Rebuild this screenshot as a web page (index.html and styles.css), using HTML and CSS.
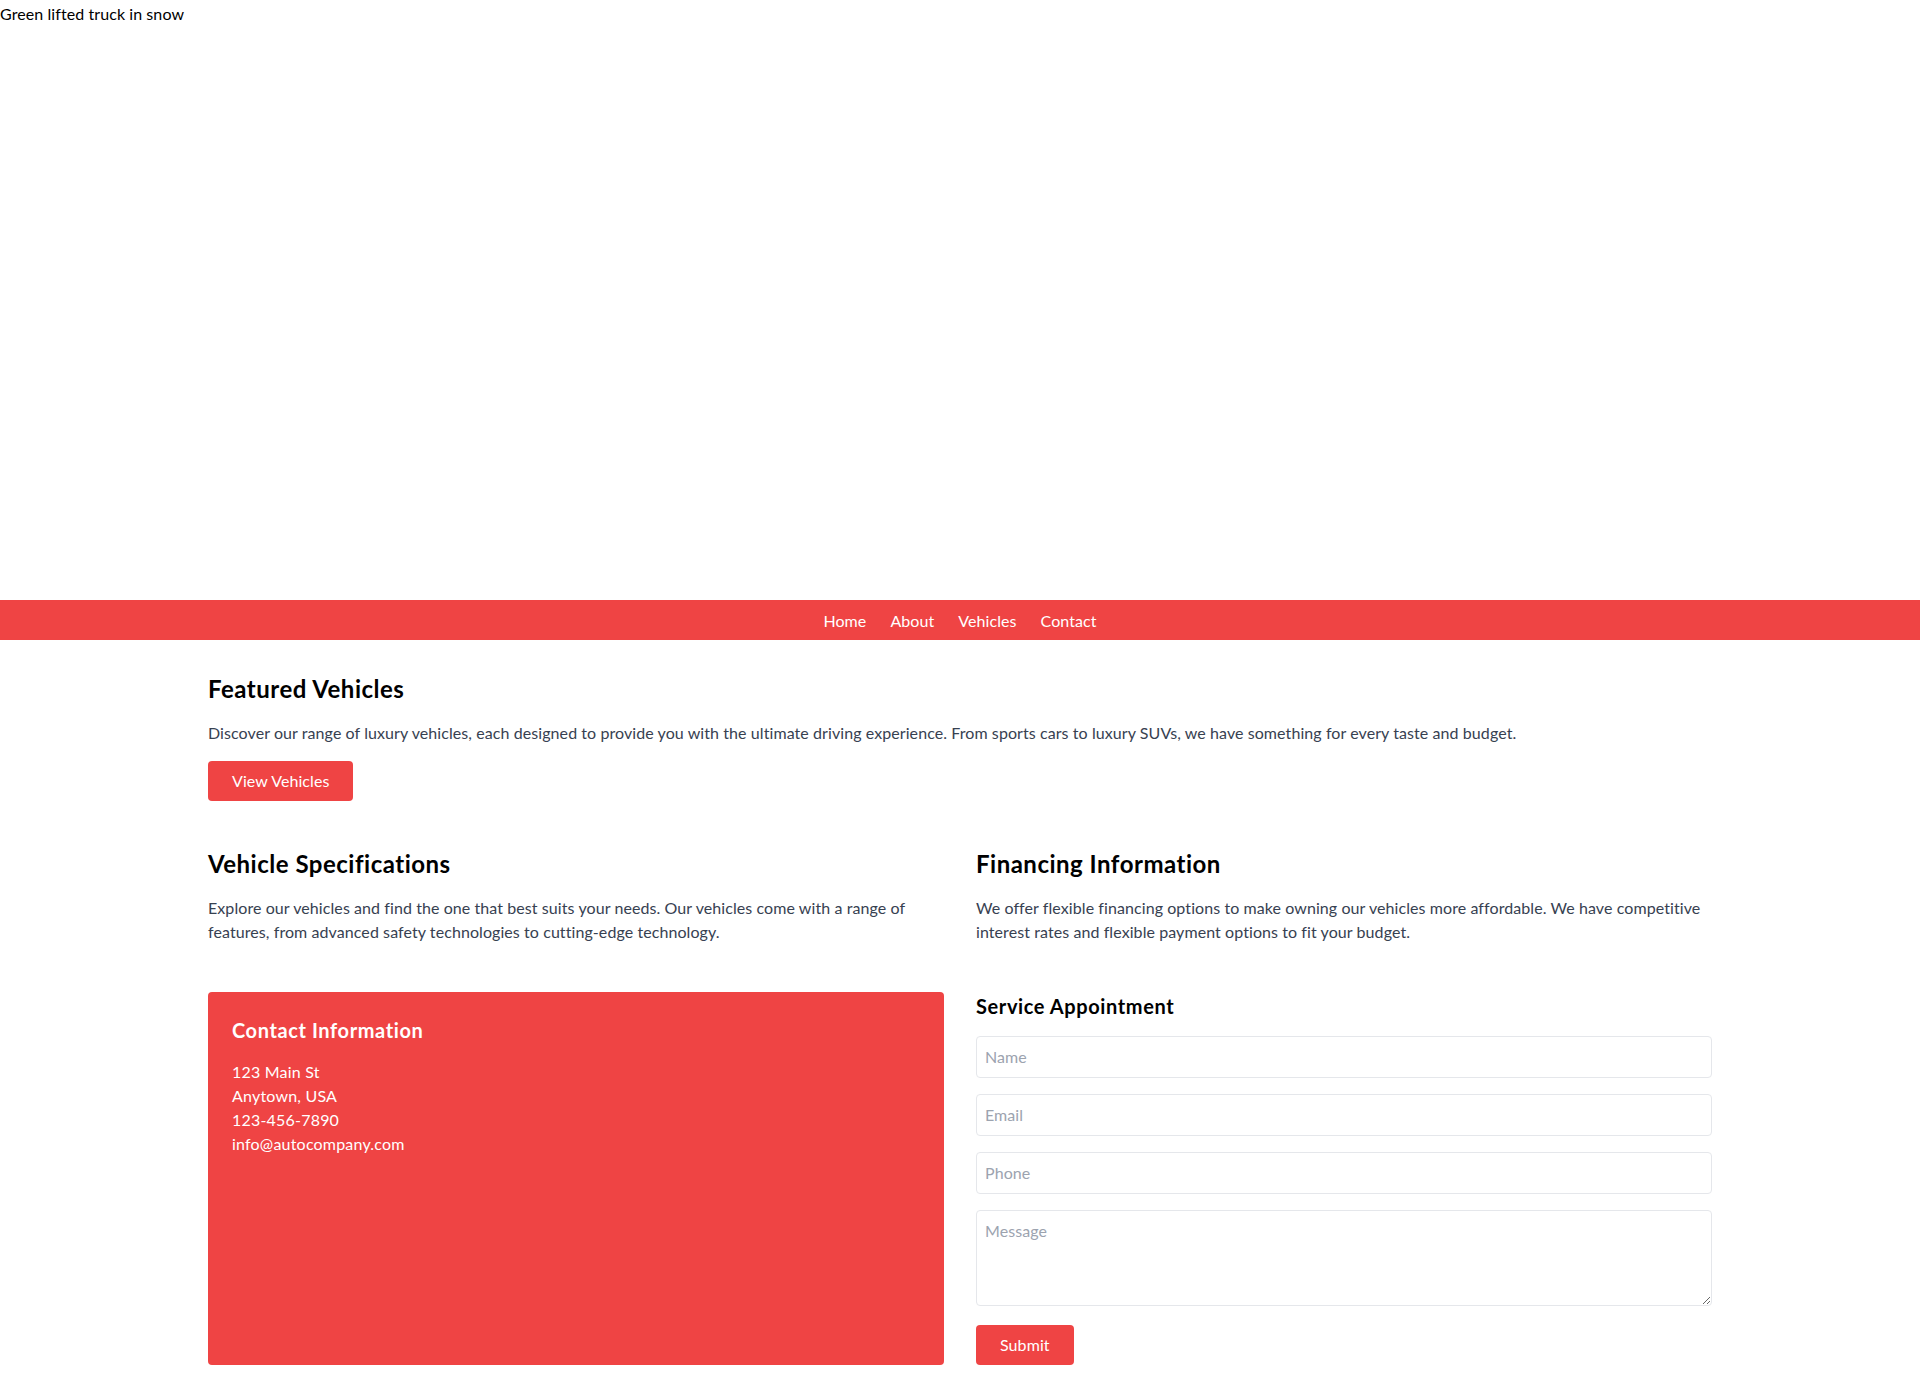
FILE: index.html
```html
<!DOCTYPE html>
<html lang="en">
<head>
<meta charset="utf-8">
<title>Auto Company</title>
<link rel="stylesheet" href="styles.css">
</head>
<body>
<div class="hero" role="img" aria-label="Green lifted truck in snow">Green lifted truck in snow</div>
<nav class="nav">
  <a href="#" class="nav-link">Home</a>
  <a href="#" class="nav-link">About</a>
  <a href="#" class="nav-link">Vehicles</a>
  <a href="#" class="nav-link">Contact</a>
</nav>
<main class="container">
  <section class="featured">
    <h2 class="section-title">Featured Vehicles</h2>
    <p class="section-text">Discover our range of luxury vehicles, each designed to provide you with the ultimate driving experience. From sports cars to luxury SUVs, we have something for every taste and budget.</p>
    <button class="btn" type="button">View Vehicles</button>
  </section>
  <div class="grid">
    <section>
      <h2 class="section-title">Vehicle Specifications</h2>
      <p class="section-text">Explore our vehicles and find the one that best suits your needs. Our vehicles come with a range of features, from advanced safety technologies to cutting-edge technology.</p>
    </section>
    <section>
      <h2 class="section-title">Financing Information</h2>
      <p class="section-text">We offer flexible financing options to make owning our vehicles more affordable. We have competitive interest rates and flexible payment options to fit your budget.</p>
    </section>
    <section class="contact-card">
      <h3 class="card-title">Contact Information</h3>
      <p class="contact-line">123 Main St</p>
      <p class="contact-line">Anytown, USA</p>
      <p class="contact-line">123-456-7890</p>
      <p class="contact-line">info@autocompany.com</p>
    </section>
    <section class="appointment">
      <h3 class="form-title">Service Appointment</h3>
      <form class="form">
        <input class="field" type="text" placeholder="Name">
        <input class="field" type="email" placeholder="Email">
        <input class="field" type="tel" placeholder="Phone">
        <textarea class="field field-area" placeholder="Message"></textarea>
        <div><button class="btn" type="submit">Submit</button></div>
      </form>
    </section>
  </div>
</main>
</body>
</html>
```
FILE: styles.css
```css
* { box-sizing: border-box; }
html, body { margin: 0; padding: 0; }
body {
  font-family: "Lato", "Open Sans", sans-serif;
  font-size: 16px;
  line-height: 24px;
  letter-spacing: 0.08px;
  color: #000;
  background: #fff;
}
h2, h3, p { margin: 0; }

.hero {
  height: 600px;
  font-size: 16px;
  line-height: 28px;
  color: #000;
}

.nav {
  background: #ef4444;
  height: 40px;
  padding-top: 1px;
  display: flex;
  justify-content: center;
  align-items: center;
  gap: 24px;
}
.nav-link {
  color: #fff;
  text-decoration: none;
  font-size: 16px;
  line-height: 24px;
}

.container {
  max-width: 1536px;
  margin: 0 auto;
  padding: 33px 16px 32px;
}

.featured { margin-bottom: 47px; }

.section-title {
  font-size: 24px;
  line-height: 32px;
  font-weight: 700;
  letter-spacing: 0.5px;
  color: #000;
  margin-bottom: 16px;
}
.section-text {
  color: #374151;
  font-size: 16px;
  line-height: 24px;
}
.featured .section-text { margin-bottom: 16px; }

.btn {
  background: #ef4444;
  color: #fff;
  border: 0;
  border-radius: 4px;
  padding: 8px 24px;
  font-family: inherit;
  font-size: 16px;
  line-height: 24px;
  letter-spacing: inherit;
  cursor: pointer;
}

.grid {
  display: grid;
  grid-template-columns: 1fr 1fr;
  column-gap: 32px;
  row-gap: 48px;
}

.contact-card {
  background: #ef4444;
  color: #fff;
  border-radius: 4px;
  padding: 24px;
}
.card-title {
  font-size: 20px;
  line-height: 28px;
  font-weight: 700;
  letter-spacing: 0.6px;
  margin-bottom: 16px;
}
.contact-line { line-height: 24px; letter-spacing: 0.2px; }

.form-title {
  font-size: 20px;
  line-height: 28px;
  font-weight: 700;
  letter-spacing: 0.6px;
  margin-bottom: 16px;
}
.form {
  display: flex;
  flex-direction: column;
  gap: 16px;
}
.field {
  display: block;
  width: 100%;
  border: 1px solid #e5e7eb;
  border-radius: 4px;
  padding: 8px;
  font-family: inherit;
  font-size: 16px;
  line-height: 24px;
  letter-spacing: inherit;
  color: #111827;
  background: #fff;
  margin: 0;
}
.field::placeholder { color: #9ca3af; }
.field-area {
  height: 96px;
  margin-bottom: 3px;
  resize: vertical;
}
```
